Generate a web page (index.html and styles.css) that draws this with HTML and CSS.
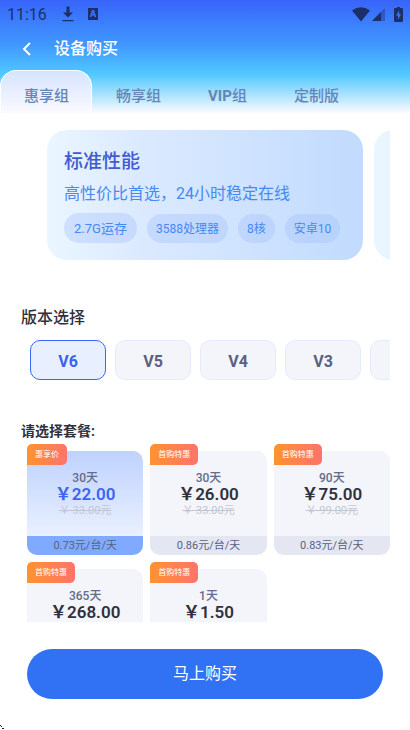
FILE: index.html
```html
<!DOCTYPE html>
<html lang="zh-CN">
<head>
<meta charset="utf-8">
<meta name="viewport" content="width=device-width, initial-scale=1">
<title>设备购买</title>
<link rel="stylesheet" href="styles.css">
</head>
<body>
<header class="top">
  <div class="status">
    <span class="clock">11:16</span>
    <svg class="download" width="12" height="16" viewBox="0 0 12 16"><path d="M4.5 0.500h3v6H11L6 11.500 1 6.500h3.500zM0.500 14h11v1.200h-11z" fill="currentColor"/></svg>
    <svg class="app" width="10" height="12" viewBox="0 0 10 12"><path fill="currentColor" fill-rule="evenodd" d="M0 0h10v12H0zM4 2 1.800 9h1.600l.4-1.500h2.400L6.600 9h1.600L6 2zM5 4l.6 2.200H4.400z"/></svg>
    <span class="signals">
      <svg width="18" height="15" viewBox="0 0 18 15"><path d="M0 3.500Q9-3 18 3.500L9 14.500z" fill="currentColor"/></svg>
      <svg class="cell" width="13" height="13" viewBox="0 0 13 13"><path d="M0 13 13 0v13z" fill="currentColor" opacity=".4"/><path d="M0 13 9 4v9z" fill="currentColor"/></svg>
      <svg class="battery" width="9" height="15" viewBox="0 0 9 15"><path fill="currentColor" fill-rule="evenodd" d="M3 0h3v1h2q1 0 1 1v12q0 1-1 1H1q-1 0-1-1V2q0-1 1-1h2zM5.200 3.500 2 8.500h2v4l3-5.200H5.200z"/></svg>
    </span>
  </div>
  <div class="titlebar">
    <button class="back" aria-label="返回"><svg width="10" height="14" viewBox="0 0 10 14"><path d="M8 1 2 7l6 6" fill="none" stroke="currentColor" stroke-width="2"/></svg></button>
    <h1>设备购买</h1>
  </div>
  <nav class="tabs">
    <button class="tab active">惠享组</button>
    <button class="tab">畅享组</button>
    <button class="tab"><b>VIP</b>组</button>
    <button class="tab">定制版</button>
  </nav>
</header>
<main>
  <section class="models">
    <article class="model">
      <h2>标准性能</h2>
      <p>高性价比首选，24小时稳定在线</p>
      <ul class="tags"><li class="lead">2.7G运存</li><li>3588处理器</li><li>8核</li><li>安卓10</li></ul>
    </article>
    <article class="model"></article>
  </section>
  <h2 class="heading">版本选择</h2>
  <div class="versions">
    <button class="version active">V6</button>
    <button class="version">V5</button>
    <button class="version">V4</button>
    <button class="version">V3</button>
    <button class="version" aria-label="更多版本"></button>
  </div>
  <h3 class="heading small">请选择套餐:</h3>
  <div class="plans">
    <button class="plan active"><span class="badge">惠享价</span><span class="days">30天</span><strong>￥22.00</strong><del>￥ 33.00元</del><span class="rate">0.73元/台/天</span></button>
    <button class="plan"><span class="badge">首购特惠</span><span class="days">30天</span><strong>￥26.00</strong><del>￥ 33.00元</del><span class="rate">0.86元/台/天</span></button>
    <button class="plan"><span class="badge">首购特惠</span><span class="days">90天</span><strong>￥75.00</strong><del>￥ 99.00元</del><span class="rate">0.83元/台/天</span></button>
    <button class="plan"><span class="badge">首购特惠</span><span class="days">365天</span><strong>￥268.00</strong></button>
    <button class="plan"><span class="badge">首购特惠</span><span class="days">1天</span><strong>￥1.50</strong></button>
  </div>
</main>
<footer><button class="buy">马上购买</button></footer>
<svg class="corner" width="5" height="6" viewBox="0 0 5 6"><path d="M0 1h1v1H0zM1 2h1v1H1zM2 4h1v1H2zM3 4h1v1H3z" fill="#222"/></svg>
</body>
</html>
```
FILE: styles.css
```css
* { box-sizing: border-box; }
body {
  margin: 0;
  height: 100vh;
  display: flex;
  flex-direction: column;
  overflow: hidden;
  position: relative;
  background: #fff;
  color: #30313d;
  font-family: Roboto, "Noto Sans CJK SC", sans-serif;
}
h1, h2, h3, p, ul { margin: 0; padding: 0; }
button { font: inherit; color: inherit; border: 0; padding: 0; background: none; }
svg { display: block; }

.top { background: linear-gradient(#3864fa 0, #4098ff 45px, #50c8ff 74px, #fbfaff 113px); }
.status { display: flex; align-items: center; height: 28px; padding: 0 7px; color: #1b3068; }
.clock { font-size: 16px; width: 55px; }
.app { margin-left: 14px; }
.signals { display: flex; align-items: center; margin-left: auto; }
.cell { margin-left: 2px; }
.battery { margin-left: 9px; }
.titlebar { display: flex; align-items: center; height: 42px; padding-left: 22px; color: #fff; }
.back { width: 32px; }
.titlebar h1 { font-size: 16px; font-weight: 500; line-height: 24px; }
.tabs { display: flex; gap: 1px; height: 43px; }
.tab {
  padding: 4px 22px 0;
  border: solid transparent;
  border-width: 1px 1px 0;
  font-size: 15px;
  font-weight: 500;
  color: #6685b5;
}
.tab.active {
  padding-left: 23px;
  border-color: #fff;
  border-radius: 16px 16px 0 0;
  background: linear-gradient(#d5e4ff, #fbfaff);
}

main { display: flex; flex-direction: column; flex: 1; min-height: 0; padding: 17px 20px 0 21px; }
.models { display: flex; flex: none; gap: 11px; overflow: hidden; padding-left: 26px; }
.model {
  flex: 0 0 316px;
  height: 130px;
  padding: 18px 17px 16px;
  border-radius: 20px;
  background: linear-gradient(90deg, #eaf6ff, #dceaff 28%, #c1dbfe);
}
.model h2 { font-size: 19px; line-height: 28px; font-weight: 500; color: #405bce; }
.model p { margin-top: 6px; font-size: 16px; line-height: 24px; color: #448af3; white-space: nowrap; }
.tags { display: flex; align-items: flex-end; gap: 10px; margin-top: 7px; list-style: none; }
.tags li {
  padding: 2px 9px 0;
  border-radius: 16px;
  background: rgba(161, 190, 253, .35);
  font-size: 12px;
  line-height: 27px;
  color: #448af3;
  white-space: nowrap;
}
.tags .lead { padding: 2px 10px 0; font-size: 13px; line-height: 28px; }

.heading { margin-top: 46px; font-size: 16px; line-height: 24px; font-weight: 500; }
.heading.small { margin-top: 40px; font-size: 14px; line-height: 22px; font-weight: 700; }
.versions { display: flex; flex: none; gap: 9px; margin-top: 10px; padding-left: 9px; overflow: hidden; }
.version {
  flex: 0 0 76px;
  height: 40px;
  padding-top: 2px;
  border: 1px solid #e3ecfe;
  border-radius: 10px;
  background: #f4f5fa;
  font-size: 16px;
  font-weight: 700;
  color: #586181;
}
.version.active { border-color: #3a67f3; background: #e8f0ff; color: #3a62ee; }

.plans {
  display: grid;
  grid-template-columns: repeat(3, 1fr);
  grid-auto-rows: 104px;
  gap: 14px 7px;
  min-height: 0;
  margin-top: 2px;
  padding: 7px 0 0 6px;
  overflow: hidden;
}
.plan {
  position: relative;
  display: flex;
  flex-direction: column;
  align-items: center;
  padding-top: 19px;
  border-radius: 0 10px 10px 10px;
  background: #f4f5fa;
}
.plan.active { background: linear-gradient(#bfd2ff, #e9f0ff 84px); }
.badge {
  position: absolute;
  top: -7px;
  left: 0;
  padding: 0 8px;
  border-radius: 5px 5px 5px 0;
  background: linear-gradient(90deg, #ff9330, #ff736b);
  font-size: 8px;
  line-height: 21px;
  color: #fff;
}
.days { font-size: 12px; line-height: 17px; font-weight: 500; color: #626c8c; }
.plan strong { font-size: 17px; line-height: 14px; font-weight: 600; }
.plan del { font-size: 11px; line-height: 20px; color: #c3c6d2; }
.rate {
  width: 100%;
  margin-top: auto;
  border-radius: 0 0 10px 10px;
  background: #e4e7f1;
  font-size: 11px;
  line-height: 19px;
  color: #586181;
}
.active strong { color: #3c65f2; }
.active .rate { background: #80aaff; }

footer { padding: 27px 27px 31px; }
.buy { display: block; width: 100%; height: 50px; border-radius: 25px; background: #3072f3; color: #fff; font-size: 16px; line-height: 24px; }
.corner { position: absolute; left: 0; bottom: 0; }
```
